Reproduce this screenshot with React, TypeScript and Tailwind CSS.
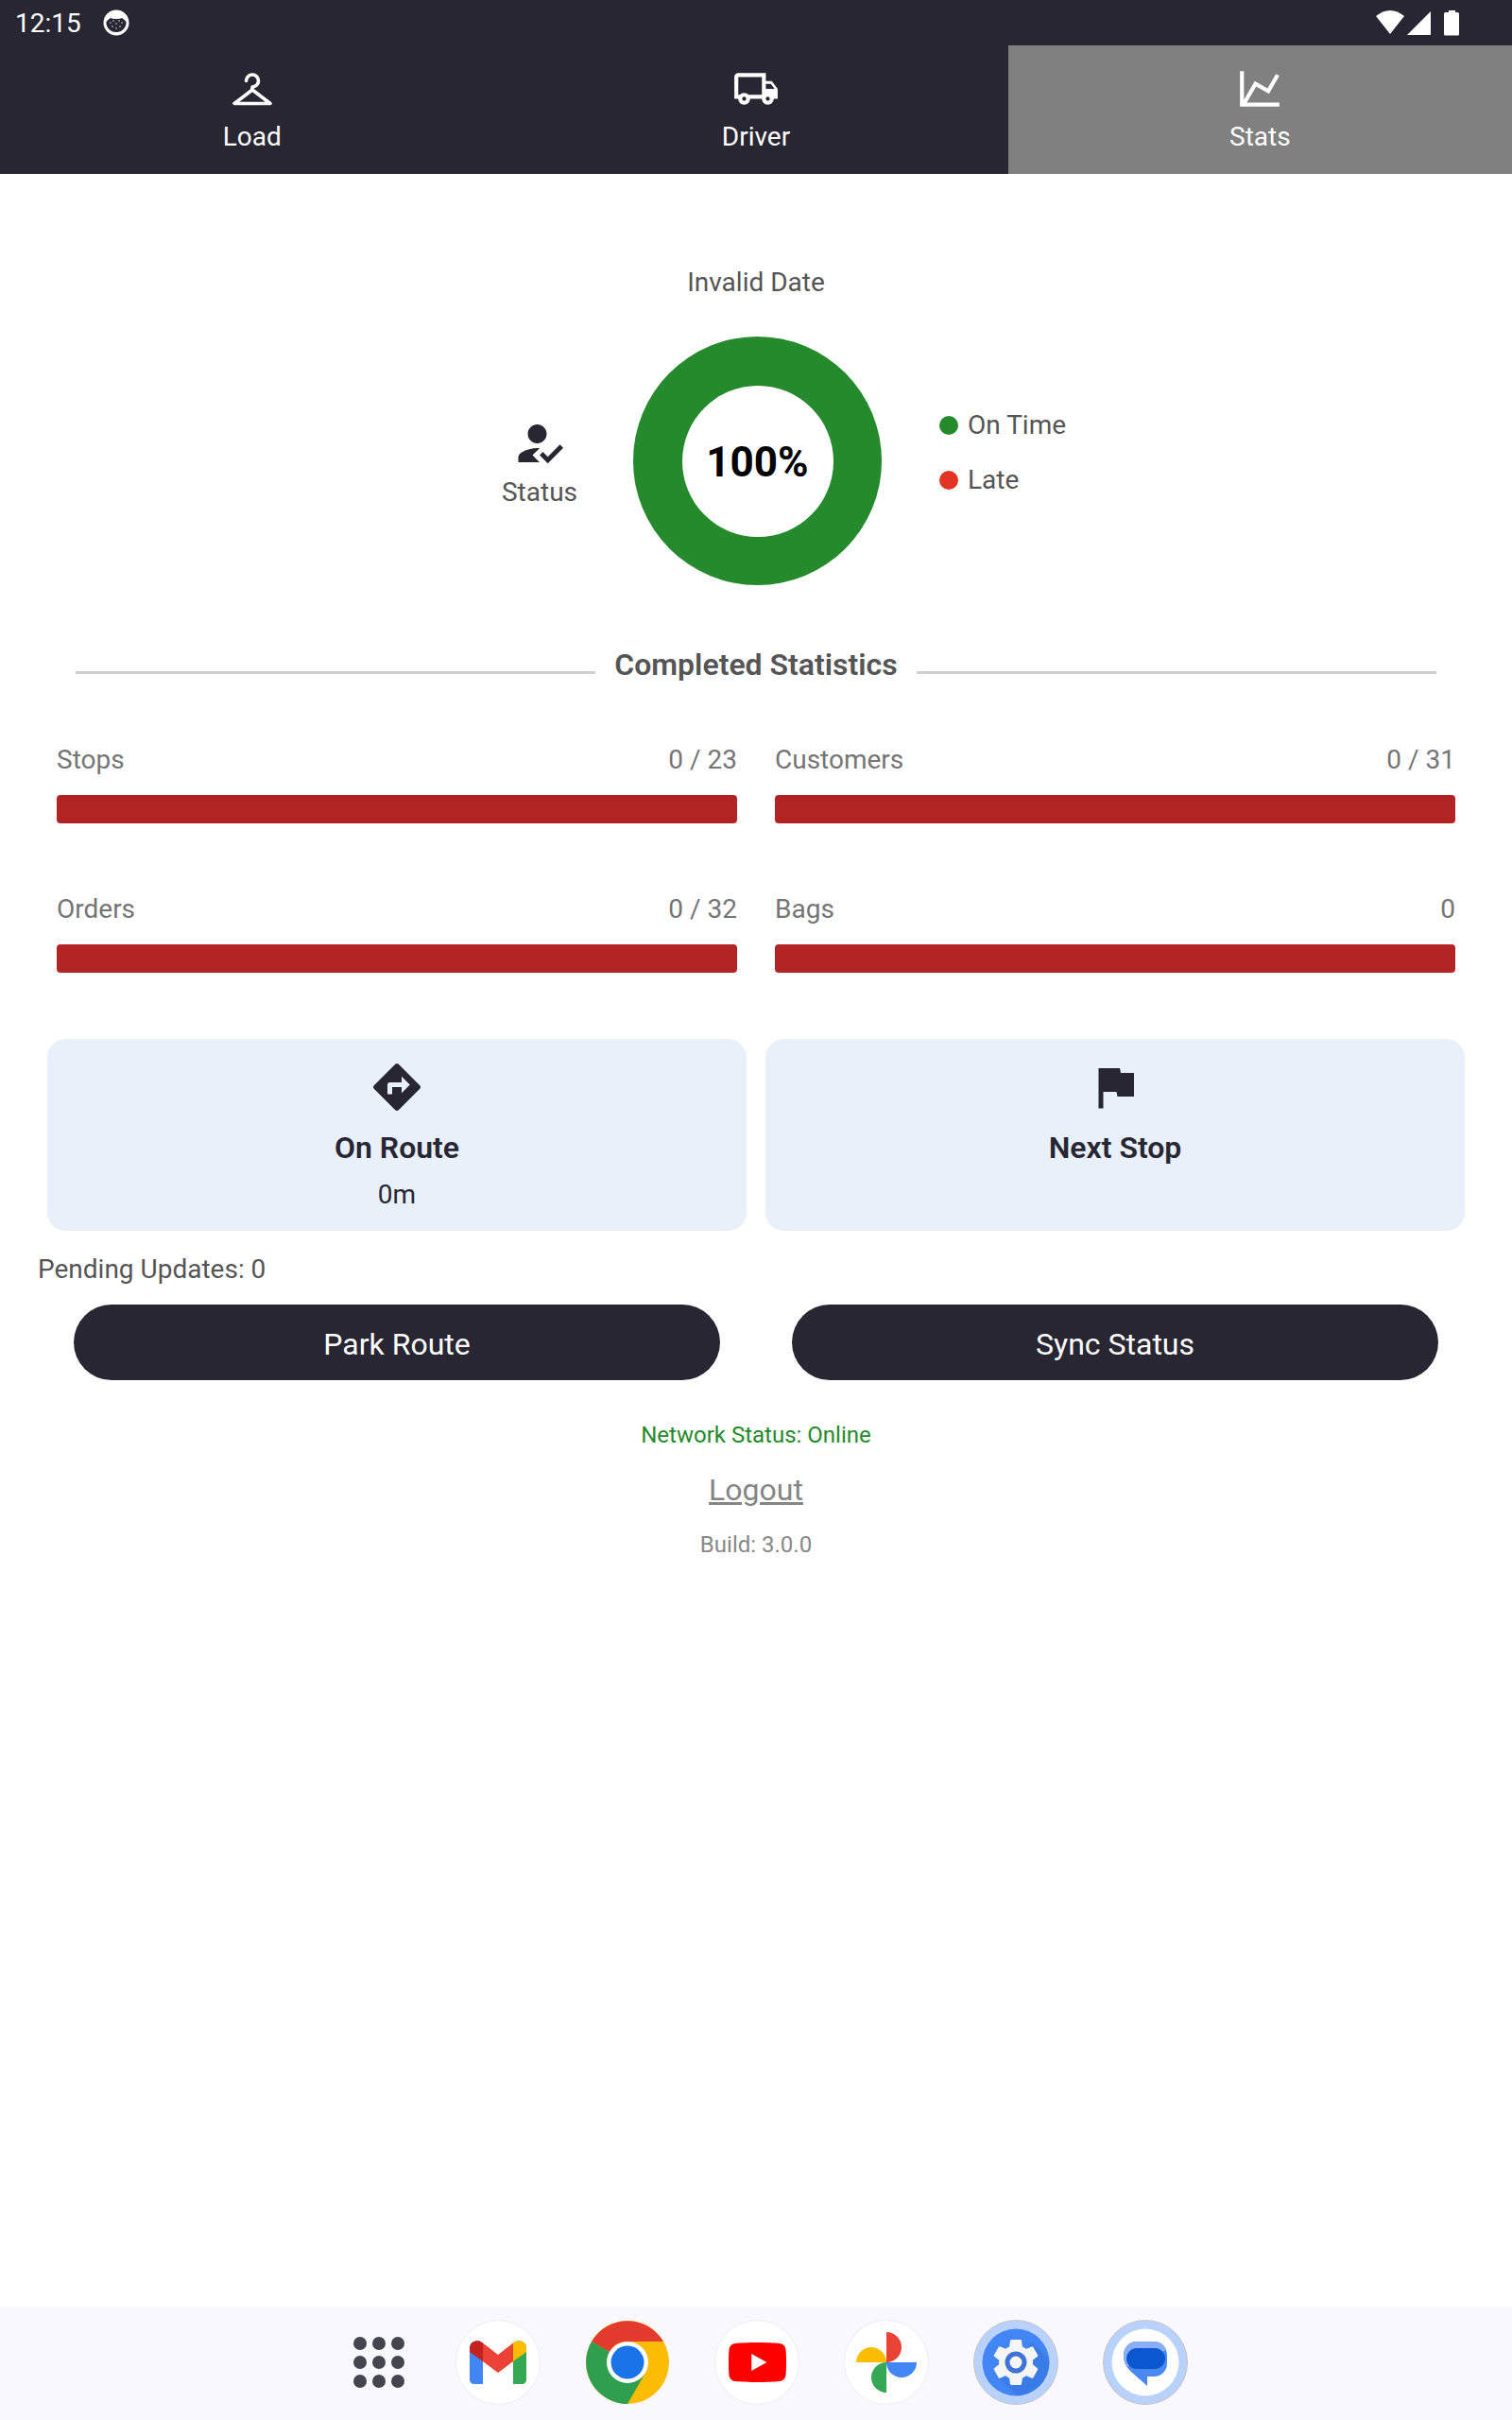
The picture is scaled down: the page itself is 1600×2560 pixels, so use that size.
import React from "react";

const dark = "#272632";

function Icon({ d, size, color = "#fff" }: { d: string; size: number; color?: string }) {
  return (
    <svg width={size} height={size} viewBox="0 0 24 24" fill={color} className="block">
      <path d={d} />
    </svg>
  );
}

const TRUCK =
  "M20 8h-3V4H3c-1.1 0-2 .9-2 2v11h2c0 1.66 1.34 3 3 3s3-1.34 3-3h6c0 1.66 1.34 3 3 3s3-1.34 3-3h2v-5l-3-4zm-.5 1.5 1.96 2.5H17V9.5h2.5zM6 18c-.55 0-1-.45-1-1s.45-1 1-1 1 .45 1 1-.45 1-1 1zm2.22-3c-.55-.61-1.33-1-2.22-1s-1.67.39-2.22 1H3V6h12v9H8.22zM18 18c-.55 0-1-.45-1-1s.45-1 1-1 1 .45 1 1-.45 1-1 1z";
const CHART =
  "M16,11.78L20.24,4.45L21.97,5.45L16.74,14.5L10.23,10.75L5.46,19H22V21H2V3H4V17.54L9.5,8L16,11.78Z";
const HOWTO =
  "M9 17l3-2.94c-.39-.04-.68-.06-1-.06-2.67 0-8 1.34-8 4v2h9l-3-3zm2-5c2.21 0 4-1.79 4-4s-1.79-4-4-4-4 1.79-4 4 1.79 4 4 4m4.47 8.5L12 17l1.4-1.41 2.07 2.08 5.13-5.17 1.4 1.41z";
const DIRECTIONS =
  "M21.71 11.29l-9-9c-.39-.39-1.02-.39-1.41 0l-9 9c-.39.39-.39 1.02 0 1.41l9 9c.39.39 1.02.39 1.41 0l9-9c.39-.38.39-1.01 0-1.41zM14 14.5V12h-4v3H8v-4c0-.55.45-1 1-1h5V7.5l3.5 3.5-3.5 3.5z";
const FLAG = "M14.4 6L14 4H5v17h2v-7h5.6l.4 2h7V6z";
const GEAR =
  "M19.14 12.94c.04-.3.06-.61.06-.94 0-.32-.02-.64-.07-.94l2.03-1.58c.18-.14.23-.41.12-.61l-1.92-3.32c-.12-.22-.37-.29-.59-.22l-2.39.96c-.5-.38-1.03-.7-1.62-.94l-.36-2.54c-.04-.24-.24-.41-.48-.41h-3.84c-.24 0-.43.17-.47.41l-.36 2.54c-.59.24-1.13.57-1.62.94l-2.39-.96c-.22-.08-.47 0-.59.22L2.74 8.87c-.12.21-.08.47.12.61l2.03 1.58c-.05.3-.09.63-.09.94s.02.64.07.94l-2.03 1.58c-.18.14-.23.41-.12.61l1.92 3.32c.12.22.37.29.59.22l2.39-.96c.5.38 1.03.7 1.62.94l.36 2.54c.05.24.24.41.48.41h3.84c.24 0 .44-.17.47-.41l.36-2.54c.59-.24 1.13-.56 1.62-.94l2.39.96c.22.08.47 0 .59-.22l1.92-3.32c.12-.22.07-.47-.12-.61l-2.01-1.58z";

function Hanger() {
  return (
    <svg width="50" height="50" viewBox="0 0 50 50" fill="none" stroke="#fff" strokeWidth="3.6" strokeLinejoin="round" strokeLinecap="round" className="block">
      <path d="M18.5 16.500A6.500 6.500 0 1 1 25 23V26" />
      <path d="M25 26L6 40.500H44z" />
    </svg>
  );
}

function StatusBar() {
  return (
    <div className="flex h-[48px] items-center justify-between bg-[#272632] pl-[16px] pr-[56px]">
      <div className="flex items-center gap-[23px] pt-[2px]">
        <span className="text-[28px] leading-[30px] text-white">12:15</span>
        <svg width="28" height="28" viewBox="0 0 28 28" className="-mt-[2px]">
          <circle cx="14" cy="14" r="13.500" fill="#fff" />
          <path d="M3.500 13c1.500-2 3-3 4.500-4 2 1.400 10 1.400 12 0 1.500 1 3 2 4.500 4 .5 6-4 11-10.500 11S3 19 3.500 13z" fill="#272632" />
          {[[8, 14], [11, 12], [14, 15], [17, 12], [20, 14], [10, 18], [14, 20], [18, 18]].map(([x, y], i) => (
            <circle key={i} cx={x} cy={y} r="0.7" fill="#fff" />
          ))}
        </svg>
      </div>
      <svg width="88" height="28" viewBox="0 0 88 28" fill="#fff">
        <path d="M0 7Q15-5 30 7L15 26z" />
        <path d="M58 2V27H33z" />
        <path d="M72 5c0-1 .6-2 1.500-2H77V1h7v2h2.500c.9 0 1.500 1 1.500 2V26c0 1-.6 1.500-1.500 1.500h-13c-.9 0-1.500-.5-1.500-1.500z" />
      </svg>
    </div>
  );
}

function Tab({ icon, label, active }: { icon: React.ReactNode; label: string; active?: boolean }) {
  return (
    <div className={`flex flex-1 flex-col items-center pt-[21px] ${active ? "bg-[#808080]" : "bg-[#272632]"}`}>
      {icon}
      <span className="mt-[10px] text-[28px] leading-[32px] text-white">{label}</span>
    </div>
  );
}

function Stat({ label, value }: { label: string; value: string }) {
  return (
    <div className="flex-1">
      <div className="flex h-[30px] items-center justify-between text-[28px] leading-[30px] text-[#757575]">
        <span>{label}</span>
        <span>{value}</span>
      </div>
      <div className="mt-[22px] h-[30px] rounded-[4px] bg-[#b22424]" />
    </div>
  );
}

function Gmail() {
  return (
    <svg width="60" height="46" viewBox="0 0 60 46">
      <path d="M0 8c0-7 8-10 14-5.500V46H5c-3 0-5-2-5-5z" fill="#4285f4" />
      <path d="M46 2.500c6-4.500 14-1.500 14 5.500v33c0 3-2 5-5 5h-9z" fill="#34a853" />
      <path d="M14 2.500L30 15 46 2.500V22L30 34 14 22z" fill="#ea4335" />
      <path d="M0 8c0-7 8-10 14-5.500V22L0 12z" fill="#c5221f" />
      <path d="M46 2.500C52-2 60 1 60 8v4L46 22z" fill="#fbbc04" />
    </svg>
  );
}

function Chrome() {
  return (
    <svg width="88" height="88" viewBox="0 0 88 88">
      <circle cx="44" cy="44" r="44" fill="#fbbc04" />
      <path d="M6 22A44 44 0 0 1 82 22H44a22 22 0 0 0-19 11z" fill="#e33b2e" />
      <path d="M6 22A44 44 0 0 0 44 88L63 55a22 22 0 0 1-38-22z" fill="#2f9e4f" />
      <circle cx="44" cy="44" r="22" fill="#fff" />
      <circle cx="44" cy="44" r="17.500" fill="#1a73e8" />
    </svg>
  );
}

function Youtube() {
  return (
    <svg width="61" height="42" viewBox="0 0 68 42" preserveAspectRatio="none">
      <path d="M8 1C20-.3 48-.3 60 1c5 .5 7 3 7.500 7 .7 7 .7 19 0 26-.5 4-2.500 6.500-7.500 7C48 42.300 20 42.300 8 41c-5-.5-7-3-7.500-7-.7-7-.7-19 0-26C1 4 3 1.500 8 1z" fill="#ff0000" />
      <path d="M27 12l18 9-18 9z" fill="#fff" />
    </svg>
  );
}

function Photos() {
  return (
    <svg width="64" height="64" viewBox="0 0 64 64">
      <path d="M32 32V0a16 16 0 0 1 0 32z" fill="#ea4335" />
      <path d="M32 32H64a16 16 0 0 1-32 0z" fill="#4285f4" />
      <path d="M32 32V64a16 16 0 0 1 0-32z" fill="#34a853" />
      <path d="M32 32H0a16 16 0 0 1 32 0z" fill="#fbbc04" />
    </svg>
  );
}

function Settings() {
  return (
    <svg width="90" height="90" viewBox="0 0 90 90" className="-mx-[1px] shrink-0">
      <defs>
        <clipPath id="settings-disc">
          <circle cx="45" cy="45" r="35.500" />
        </clipPath>
      </defs>
      <circle cx="45" cy="45" r="44.500" fill="#b9d2fb" stroke="#c4c4c4" strokeWidth="1" />
      <circle cx="45" cy="45" r="35.500" fill="#4285f4" />
      <path d="M62 24L90 52V90H56L28 62z" fill="#2f6fd8" opacity="0.45" clipPath="url(#settings-disc)" />
      <svg x="15" y="15" width="60" height="60" viewBox="0 0 24 24">
        <path d={GEAR} fill="#f5f5f5" />
      </svg>
      <circle cx="45" cy="45" r="9" fill="#f5f5f5" stroke="#3f74d6" strokeWidth="5" />
    </svg>
  );
}

function Messages() {
  return (
    <svg width="90" height="90" viewBox="0 0 90 90" className="-mx-[1px] shrink-0">
      <circle cx="45" cy="45" r="44.500" fill="#b9d2fb" stroke="#c4c4c4" strokeWidth="1" />
      <circle cx="45" cy="45" r="35.500" fill="#fff" />
      <path d="M36 23H54C62 23 68 29 68 38V46C68 54 62 60 54 60H47V70L30 55C25 50 22 45 22 38 22 29 28 23 36 23z" fill="#4a88f2" />
      <path d="M36 23H54C60 23 65 26 67 32L25 50C23 46 22 42 22 38 22 29 28 23 36 23z" fill="#8aaefc" />
      <rect x="25" y="30" width="41" height="22" rx="11" fill="#0b57d0" />
    </svg>
  );
}

function DockCircle({ children }: { children: React.ReactNode }) {
  return (
    <div className="flex h-[88px] w-[88px] items-center justify-center rounded-full bg-white shadow-[0_0_2px_rgba(0,0,0,0.12)]">
      {children}
    </div>
  );
}

function Dots() {
  return (
    <div className="-mr-[11px] grid h-[88px] w-[88px] grid-cols-3 content-center justify-center gap-[6.5px] px-[17px]">
      {Array.from({ length: 9 }).map((_, i) => (
        <div key={i} className="h-[13.5px] w-[13.5px] rounded-full bg-[#45454f]" />
      ))}
    </div>
  );
}

export default function App() {
  return (
    <div className="flex min-h-[2560px] flex-col bg-white font-['Roboto',sans-serif]">
      <StatusBar />
      <div className="flex h-[136px]">
        <Tab icon={<Hanger />} label="Load" />
        <Tab icon={<Icon d={TRUCK} size={50} />} label="Driver" />
        <Tab icon={<Icon d={CHART} size={50} />} label="Stats" active />
      </div>

      <div className="mt-[99px] text-center text-[28px] leading-[32px] text-[#555555]">Invalid Date</div>

      <div className="mt-[41px] flex h-[263px] items-center pl-[3px]">
        <div className="flex flex-1 justify-end">
          <div className="mr-[36px] flex w-[126px] flex-col items-center">
            <Icon d={HOWTO} size={60} color={dark} />
            <span className="mt-[6px] text-[28px] leading-[32px] text-[#555555]">Status</span>
          </div>
        </div>
        <div className="flex h-[263px] w-[263px] items-center justify-center rounded-full bg-[#258a2b]">
          <div className="flex h-[160px] w-[160px] items-center justify-center rounded-full bg-white pt-[3px]">
            <span className="text-[44px] font-bold leading-[50px] text-black">100%</span>
          </div>
        </div>
        <div className="flex-1">
          <div className="ml-[61px] flex flex-col gap-[28px] pb-[17px]">
            <div className="flex items-center gap-[10px]">
              <div className="h-[20px] w-[20px] rounded-full bg-[#258a2b]" />
              <span className="text-[28px] leading-[30px] text-[#555555]">On Time</span>
            </div>
            <div className="flex items-center gap-[10px]">
              <div className="h-[20px] w-[20px] rounded-full bg-[#e23324]" />
              <span className="text-[28px] leading-[30px] text-[#555555]">Late</span>
            </div>
          </div>
        </div>
      </div>

      <div className="mt-[64px] flex h-[40px] items-center gap-[20px] px-[80px]">
        <div className="mt-[16px] h-[3px] flex-1 bg-[#cfcfcf]" />
        <span className="text-[32px] font-semibold leading-[40px] text-[#555555]">Completed Statistics</span>
        <div className="mt-[16px] h-[3px] flex-1 bg-[#cfcfcf]" />
      </div>

      <div className="mt-[66px] flex flex-col gap-[76px] px-[60px]">
        <div className="flex gap-[40px]">
          <Stat label="Stops" value="0 / 23" />
          <Stat label="Customers" value="0 / 31" />
        </div>
        <div className="flex gap-[40px]">
          <Stat label="Orders" value="0 / 32" />
          <Stat label="Bags" value="0" />
        </div>
      </div>

      <div className="mt-[70px] flex gap-[20px] px-[50px]">
        <div className="flex h-[203px] flex-1 flex-col items-center rounded-[20px] bg-[#e8f0fa] pt-[21px]">
          <Icon d={DIRECTIONS} size={60} color={dark} />
          <span className="mt-[14px] text-[32px] font-semibold leading-[40px] text-[#272632]">On Route</span>
          <span className="mt-[14px] text-[28px] leading-[32px] text-[#272632]">0m</span>
        </div>
        <div className="flex h-[203px] flex-1 flex-col items-center rounded-[20px] bg-[#e8f0fa] pt-[21px]">
          <Icon d={FLAG} size={60} color={dark} />
          <span className="mt-[14px] text-[32px] font-semibold leading-[40px] text-[#272632]">Next Stop</span>
        </div>
      </div>

      <div className="mt-[25px] pl-[40px] text-[28px] leading-[32px] text-[#555555]">Pending Updates: 0</div>

      <div className="mt-[21px] flex justify-between px-[78px]">
        <div className="flex h-[80px] w-[684px] items-center justify-center rounded-full bg-[#272632] pt-[3px] text-[32px] text-white">
          Park Route
        </div>
        <div className="flex h-[80px] w-[684px] items-center justify-center rounded-full bg-[#272632] pt-[3px] text-[32px] text-white">
          Sync Status
        </div>
      </div>

      <div className="mt-[44px] text-center text-[24px] leading-[28px] text-[#258a2b]">Network Status: Online</div>
      <div className="mt-[24px] text-center text-[32px] leading-[40px] text-[#858585] underline">Logout</div>
      <div className="mt-[24px] text-center text-[24px] leading-[28px] text-[#888888]">Build: 3.0.0</div>

      <div className="mt-auto flex h-[120px] items-center justify-center gap-[49px] bg-[#f8f8fe] pb-[2px] pl-[13px]">
        <Dots />
        <DockCircle><Gmail /></DockCircle>
        <Chrome />
        <DockCircle><Youtube /></DockCircle>
        <DockCircle><Photos /></DockCircle>
        <Settings />
        <Messages />
      </div>
    </div>
  );
}
